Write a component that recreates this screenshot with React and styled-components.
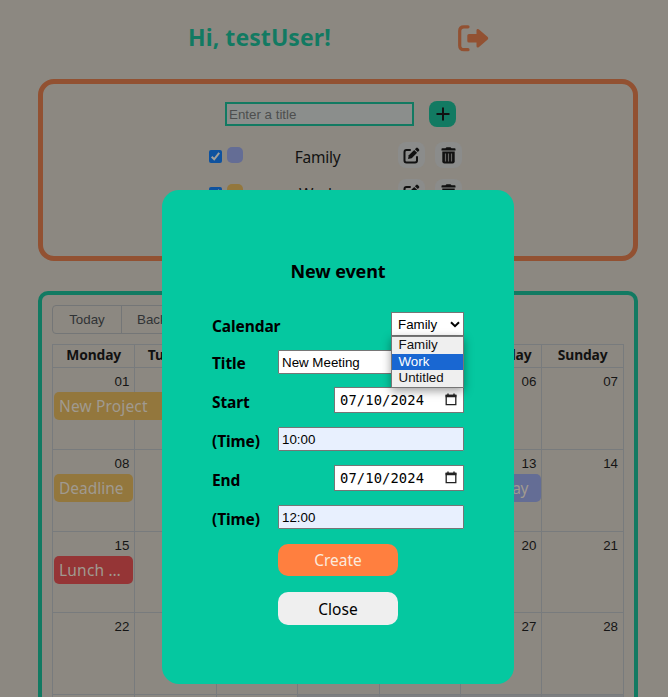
import React from "react";
import styled, { createGlobalStyle } from "styled-components";

const Global = createGlobalStyle`
  * { box-sizing: border-box; }
  html, body { margin: 0; height: 697px; overflow: hidden; background: #8c8881; }
  body, button { font-family: "Noto Sans", "Open Sans", sans-serif; }
  h1, h2 { margin: 0; }
  button, input { margin: 0; border: 0; padding: 0; }
`;
const Page = styled.div`
  height: 697px;
  overflow: hidden;
  padding: 0 30px 0 38px;
`;
const Header = styled.header`
  height: 79px;
  display: flex;
  align-items: flex-start;
  padding: 21px 0 0 150px;
`;
const Greeting = styled.h1`
  width: 270px;
  font-size: 23px;
  line-height: 33px;
  letter-spacing: 0.08px;
  color: #127a62;
  white-space: nowrap;
`;
const LogoutButton = styled.button`
  margin-top: 4px;
  background: none;
  height: 27px;
  color: #925132;
`;
const CalendarList = styled.section`
  height: 182px;
  border: 5px solid #925132;
  border-radius: 16px;
  padding: 17px 0 0 182px;
`;
const AddRow = styled.div`
  display: flex;
  gap: 15px;
  height: 41px;
`;
const NewTitle = styled.input`
  width: 189px;
  height: 24px;
  margin-top: 1px;
  border: 2px solid #127a62;
  background: #8b8e8c;
  padding: 0 2px;
  font: 13.33px "Liberation Sans", sans-serif;
  &::placeholder { color: #4d4e4e; opacity: 1; }
`;
const SquareButton = styled.button`
  width: 27px;
  height: 26px;
  border-radius: 8px;
  display: grid;
  place-items: center;
  color: #111;
  background: ${(p) => (p.$primary ? "#127a62" : "#8b8c8b")};
`;
const CalendarRow = styled.div`
  height: 37px;
  margin-left: -16px;
  display: grid;
  grid-template-columns: 18px 16px 147px 8px 27px 10px 27px;
  align-items: start;
`;
const Check = styled.span`
  width: 13px;
  height: 13px;
  margin-top: 8px;
  border-radius: 2px;
  background: #0e529f;
  display: grid;
`;
const Swatch = styled.span`
  width: 16px;
  height: 16px;
  margin-top: 5px;
  border-radius: 5px;
  background: ${(p) => p.$color};
`;
const CalendarName = styled.span`
  text-align: center;
  font-size: 15.5px;
  line-height: 26px;
  letter-spacing: -0.25px;
  padding: 2px 0 0 2px;
  color: #121212;
`;
const Planner = styled.section`
  margin-top: 30px;
  height: 460px;
  border: 4px solid #127a62;
  border-radius: 10px;
  padding: 10px;
`;
const Toolbar = styled.div`
  display: flex;
  height: 39px;
`;
const ToolButton = styled.button`
  width: 70px;
  height: 29px;
  border: 1px solid #747677;
  border-radius: ${(p) => (p.$first ? "4px 0 0 4px" : "0")};
  margin-left: ${(p) => (p.$first ? "0" : "-1px")};
  background: none;
  color: #303335;
  padding: ${(p) => (p.$first ? "0" : "0 15px")};
  text-align: ${(p) => (p.$first ? "center" : "left")};
  font: 13.33px "Liberation Sans", sans-serif;
`;
const Month = styled.div`
  width: 572px;
  border: 1px solid #787b7d;
  border-bottom: 0;
`;
const Weekdays = styled.div`
  display: grid;
  grid-template-columns: repeat(6, 81.4px) 1fr;
  height: 22px;
`;
const Weekday = styled.div`
  border-left: 1px solid #787b7d;
  text-align: center;
  font-weight: 700;
  font-size: 13.8px;
  line-height: 20px;
  letter-spacing: -0.1px;
  color: #111;
  &:first-child { border-left: 0; }
`;
const Week = styled.div`
  display: grid;
  grid-template-columns: repeat(6, 81.4px) 1fr;
  grid-template-rows: 24px 28px;
  height: 81.75px;
  border-top: 1px solid #787b7d;
`;
const Day = styled.div`
  grid-column: ${(p) => p.$col};
  grid-row: 1 / 3;
  height: 80.75px;
  border-left: ${(p) => (p.$col === 1 ? "0" : "1px solid #787b7d")};
  background: ${(p) => (p.$off ? "#7e7f80" : "none")};
  padding: 6px 5px 0 0;
  text-align: right;
  font: 13.33px/15px "Liberation Sans", sans-serif;
  color: #151515;
`;
const Event = styled.div`
  grid-column: ${(p) => p.$from} / span ${(p) => p.$span};
  grid-row: 2;
  margin: 0 ${(p) => (p.$align ? 0 : 1)}px 0 1px;
  padding: 0 ${(p) => (p.$align ? 13 : 5)}px 0 5px;
  border-radius: 5px;
  background: ${(p) => p.$color};
  color: #a09a90;
  font-size: 15.5px;
  line-height: 28px;
  letter-spacing: ${(p) => p.$tracking}px;
  text-align: ${(p) => p.$align || "left"};
  white-space: nowrap;
`;
const Modal = styled.form`
  position: fixed;
  left: 162px;
  top: 190px;
  width: 352px;
  height: 494px;
  border-radius: 17px;
  background: #05c8a0;
  padding: 68px 50px 0;
`;
const ModalTitle = styled.h2`
  text-align: center;
  font-size: 18px;
  line-height: 26px;
  letter-spacing: -0.1px;
  height: 54px;
`;
const Fields = styled.div`
  display: grid;
  grid-template-rows: 38px 37px 40px 38px 40px 39px;
`;
const Field = styled.div`
  display: flex;
  justify-content: space-between;
  align-items: flex-start;
`;
const Label = styled.label`
  font-weight: 700;
  font-size: 15.5px;
  line-height: 26px;
  letter-spacing: -0.1px;
  padding-top: ${(p) => p.$drop}px;
`;
const TextInput = styled.input`
  width: 186px;
  height: 24px;
  border: 1px solid #767676;
  border-radius: 1px;
  background: ${(p) => (p.$filled ? "#e8f0fe" : "#fff")};
  padding: 0 3px;
  font: 13.33px "Liberation Sans", sans-serif;
  color: #000;
`;
const DateBox = styled.div`
  width: 130px;
  height: 26px;
  border: 1px solid #767676;
  background: #fff;
  display: flex;
  align-items: center;
  justify-content: space-between;
  padding: 0 6px 1px 5px;
  font: 13.8px "DejaVu Sans Mono", monospace;
  letter-spacing: 0.1px;
`;
const Select = styled.div`
  position: relative;
  width: 73px;
  height: 24px;
  border: 1px solid #767676;
  background: #fff;
  display: flex;
  align-items: center;
  justify-content: space-between;
  padding: 0 3px 0 6px;
  font: 13.33px "Liberation Sans", sans-serif;
`;
const Options = styled.div`
  position: absolute;
  z-index: 2;
  left: -1px;
  top: 23px;
  width: 73px;
  border: 1px solid #767676;
  background: #efefef;
  box-shadow: 0 3px 9px rgba(0, 0, 0, 0.38);
`;
const Option = styled.div`
  height: ${(p) => (p.$active ? 16 : 17)}px;
  line-height: 16px;
  padding-left: 6.5px;
  background: ${(p) => (p.$active ? "#1967d2" : "none")};
  color: ${(p) => (p.$active ? "#fff" : "#111")};
`;
const Actions = styled.div`
  display: grid;
  grid-template-rows: 32px 33px;
  gap: 16px;
  width: 120px;
  margin-left: 66px;
`;
const ActionButton = styled.button`
  border-radius: 10px;
  background: ${(p) => (p.$primary ? "#ff7f3f" : "#efefef")};
  color: ${(p) => (p.$primary ? "#fbeadd" : "#000")};
  font-size: 15.5px;
`;

const LogoutIcon = () => (
  <svg width="31" height="27" viewBox="0 0 31 27" fill="none">
    <path d="M10 1.800H6Q1.700 1.800 1.700 6V20.500Q1.700 24.700 6 24.700H10" stroke="currentColor" strokeWidth="3.200" strokeLinecap="round" />
    <path d="M11 9H18.500V5.200Q18.800 3.300 20.700 4.200L29.700 12Q30.800 13.200 29.700 14.500L20.700 22.300Q18.800 23.200 18.500 21.300V17.500H11Q9.300 17.500 9.300 16V10.500Q9.300 9 11 9Z" fill="currentColor" />
  </svg>
);
const PlusIcon = () => (
  <svg width="14" height="14" viewBox="0 0 14 14">
    <path d="M7 .5v13M.5 7h13" stroke="currentColor" strokeWidth="2" />
  </svg>
);
const EditIcon = () => (
  <svg width="17" height="17" viewBox="0 0 17 17" fill="none">
    <path d="M7 3H3.500Q1.500 3 1.500 5V13.500Q1.500 15.500 3.500 15.500H12Q14 15.500 14 13.500V10" stroke="currentColor" strokeWidth="2" strokeLinecap="round" />
    <path d="M5 12L5.800 8.300L11.200 2.900L14.100 5.800L8.700 11.200Z" fill="currentColor" />
    <path d="M11.900 2.200L13.200 .9Q14 .3 14.800 1L16 2.200Q16.700 3 16 3.800L14.800 5.100Z" fill="currentColor" />
  </svg>
);
const TrashIcon = () => (
  <svg width="15" height="17" viewBox="0 0 15 17" fill="none">
    <path d="M.5 2Q.5 1.300 1.300 1.300H4.500L5.500 .2H9.500L10.500 1.300H13.700Q14.500 1.300 14.500 2V3.400H.5Z" fill="currentColor" />
    <path d="M1.300 4.600H13.700V14.500Q13.700 16.600 11.500 16.600H3.500Q1.300 16.600 1.300 14.500Z" fill="currentColor" />
    <path d="M4.500 6.500V14.500M7.500 6.500V14.500M10.500 6.500V14.500" stroke="#656563" strokeWidth="1.200" />
  </svg>
);
const CheckIcon = () => (
  <svg width="13" height="13" viewBox="0 0 13 13" fill="none">
    <path d="M2.700 6.800L5.200 9.300L10.200 2.900" stroke="#a2a09b" strokeWidth="2" />
  </svg>
);
const ChevronIcon = () => (
  <svg width="10" height="7" viewBox="0 0 10 7" fill="none">
    <path d="M1 1.200L5 5.200L9 1.200" stroke="#000" strokeWidth="2" />
  </svg>
);
const DateIcon = () => (
  <svg width="12" height="13" viewBox="0 0 12 13" fill="none">
    <path d="M1.200 2.500H10.800V11.600H1.200Z" stroke="#222" strokeWidth="1.300" />
    <path d="M.6 1.800H11.400V4.300H.6ZM2.300 .5H3.700V2H2.300ZM8.300 .5H9.700V2H8.300Z" fill="#222" />
  </svg>
);

const calendars = [
  { name: "Family", color: "#646d95" },
  { name: "Work", color: "#93773d" },
];
const weekdays = ["Monday", "Tuesday", "Wednesday", "Thursday", "Friday", "Saturday", "Sunday"];
const weeks = [0, 1, 2, 3, 4].map((w) => [1, 2, 3, 4, 5, 6, 7].map((d) => w * 7 + d));
const events = [
  [{ title: "New Project", from: 1, span: 2, color: "#93773d", tracking: 0.15 }],
  [
    { title: "Deadline", from: 1, span: 1, color: "#93773d", tracking: 0 },
    { title: "Holiday", from: 5, span: 2, color: "#646d95", tracking: -0.2, align: "right" },
  ],
  [{ title: "Lunch …", from: 1, span: 1, color: "#953536", tracking: 0.2 }],
  [],
  [],
];

function DateField({ label, value }) {
  return (
    <Field>
      <Label $drop={2}>{label}</Label>
      <DateBox>{value}<DateIcon /></DateBox>
    </Field>
  );
}
function TextField({ label, value, filled, drop = 1 }) {
  return (
    <Field>
      <Label $drop={drop}>{label}</Label>
      <TextInput $filled={filled} defaultValue={value} />
    </Field>
  );
}

export default function App() {
  return (
    <>
      <Global />
      <Page>
        <Header>
          <Greeting>Hi, testUser!</Greeting>
          <LogoutButton aria-label="Log out"><LogoutIcon /></LogoutButton>
        </Header>
        <CalendarList>
          <AddRow>
            <NewTitle placeholder="Enter a title" />
            <SquareButton $primary aria-label="Add"><PlusIcon /></SquareButton>
          </AddRow>
          {calendars.map((c) => (
            <CalendarRow key={c.name}>
              <Check><CheckIcon /></Check>
              <Swatch $color={c.color} />
              <CalendarName>{c.name}</CalendarName>
              <span />
              <SquareButton aria-label="Edit"><EditIcon /></SquareButton>
              <span />
              <SquareButton aria-label="Delete"><TrashIcon /></SquareButton>
            </CalendarRow>
          ))}
        </CalendarList>
        <Planner>
          <Toolbar>
            <ToolButton $first>Today</ToolButton>
            <ToolButton>Back</ToolButton>
          </Toolbar>
          <Month>
            <Weekdays>{weekdays.map((d) => <Weekday key={d}>{d}</Weekday>)}</Weekdays>
            {weeks.map((days, w) => (
              <Week key={w}>
                {days.map((n, i) => (
                  <Day key={n} $col={i + 1} $off={n > 31}>
                    {n <= 28 && String(n).padStart(2, "0")}
                  </Day>
                ))}
                {events[w].map((e) => (
                  <Event key={e.title} $from={e.from} $span={e.span} $color={e.color} $tracking={e.tracking} $align={e.align}>
                    {e.title}
                  </Event>
                ))}
              </Week>
            ))}
          </Month>
        </Planner>
      </Page>
      <Modal>
        <ModalTitle>New event</ModalTitle>
        <Fields>
          <Field>
            <Label $drop={1}>Calendar</Label>
            <Select>
              Family<ChevronIcon />
              <Options>
                <Option>Family</Option>
                <Option $active>Work</Option>
                <Option>Untitled</Option>
              </Options>
            </Select>
          </Field>
          <TextField label="Title" value="New Meeting" drop={0} />
          <DateField label="Start" value="07/10/2024" />
          <TextField label="(Time)" value="10:00" filled />
          <DateField label="End" value="07/10/2024" />
          <TextField label="(Time)" value="12:00" filled />
        </Fields>
        <Actions>
          <ActionButton type="button" $primary>Create</ActionButton>
          <ActionButton type="button">Close</ActionButton>
        </Actions>
      </Modal>
    </>
  );
}
